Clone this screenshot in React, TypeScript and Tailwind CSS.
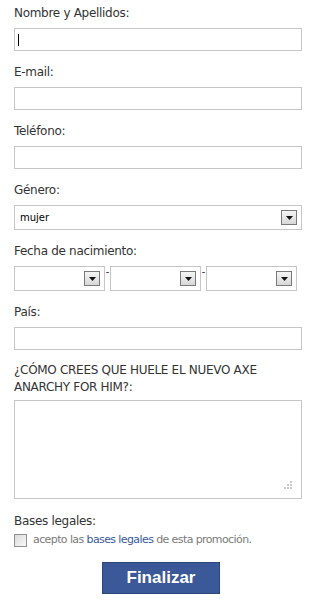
const font = "font-['DejaVu_Sans',Verdana,sans-serif]"

function Label({ children }: { children: React.ReactNode }) {
  return (
    <div className="text-[12px] leading-[16px] tracking-[-0.3px] text-[#333] mb-[7px]">{children}</div>
  )
}

function TextInput({ caret }: { caret?: boolean }) {
  return (
    <div className="h-[23px] w-[288px] border border-[#c6c6c6] bg-white flex items-center pl-[3px]">
      {caret && <span className="block w-px h-[12px] bg-black" />}
    </div>
  )
}

function Arrow() {
  return (
    <div className="w-[16px] h-[15px] border border-[#7a7a7a] bg-gradient-to-b from-[#f4f4f4] to-[#d8d8d8] flex items-center justify-center">
      <svg width="7" height="4" viewBox="0 0 7 4">
        <polygon points="0,0 7,0 3.5,4" fill="#111" />
      </svg>
    </div>
  )
}

function Select({ value, width }: { value?: string; width: string }) {
  return (
    <div className={`h-[25px] ${width} border border-[#c6c6c6] bg-white flex items-center justify-between pl-[5px] pr-[4px]`}>
      <span className="text-[10px] text-black">{value}</span>
      <Arrow />
    </div>
  )
}

export default function App() {
  return (
    <main className={`min-h-screen bg-white pl-[14px] pt-[5px] ${font}`}>
      <div className="mb-[13px]">
        <Label>Nombre y Apellidos:</Label>
        <TextInput caret />
      </div>
      <div className="mb-[13px]">
        <Label>E-mail:</Label>
        <TextInput />
      </div>
      <div className="mb-[13px]">
        <Label>Teléfono:</Label>
        <TextInput />
      </div>
      <div className="mb-[13px]">
        <Label>Género:</Label>
        <Select value="mujer" width="w-[288px]" />
      </div>
      <div className="mb-[13px]">
        <Label>Fecha de nacimiento:</Label>
        <div className="flex items-start">
          <Select width="w-[91px]" />
          <span className="w-[5px] text-[10px] leading-[12px] text-[#333] text-center">-</span>
          <Select width="w-[91px]" />
          <span className="w-[5px] text-[10px] leading-[12px] text-[#333] text-center">-</span>
          <Select width="w-[91px]" />
        </div>
      </div>
      <div className="mb-[12px]">
        <Label>País:</Label>
        <TextInput />
      </div>
      <div className="mb-[14px]">
        <div className="text-[12px] leading-[17px] tracking-[-0.3px] text-[#333] mb-[4px] w-[270px]">
          ¿CÓMO CREES QUE HUELE EL NUEVO AXE ANARCHY FOR HIM?:
        </div>
        <div className="relative h-[99px] w-[288px] border border-[#c6c6c6] bg-white">
          <svg className="absolute right-[9px] bottom-[8px]" width="8" height="9" viewBox="0 0 8 9">
            <g fill="#c8c8c8">
              <rect x="6" y="0" width="2" height="2" />
              <rect x="3" y="3" width="2" height="2" />
              <rect x="6" y="3" width="2" height="2" />
              <rect x="0" y="6" width="2" height="2" />
              <rect x="3" y="6" width="2" height="2" />
              <rect x="6" y="6" width="2" height="2" />
            </g>
          </svg>
        </div>
      </div>
      <div className="text-[12px] leading-[16px] tracking-[-0.3px] text-[#333]">Bases legales:</div>
      <label className="flex items-center gap-[6px] mt-[3px]">
        <span className="block w-[13px] h-[13px] border border-[#8f8f8f] bg-gradient-to-br from-[#dcdcdc] to-[#f8f8f8]" />
        <span className="text-[11px] tracking-[-0.6px] text-[#7a7a7a]">
          acepto las <span className="text-[#3b5998]">bases legales</span> de esta promoción.
        </span>
      </label>
      <div className="flex justify-center w-[288px] mt-[13px]">
        <button className="w-[118px] h-[32px] bg-[#3b5998] border border-[#2d4679] text-white font-bold text-[17px] font-['Liberation_Sans',Arial,sans-serif] ml-[6px]">
          Finalizar
        </button>
      </div>
    </main>
  )
}
